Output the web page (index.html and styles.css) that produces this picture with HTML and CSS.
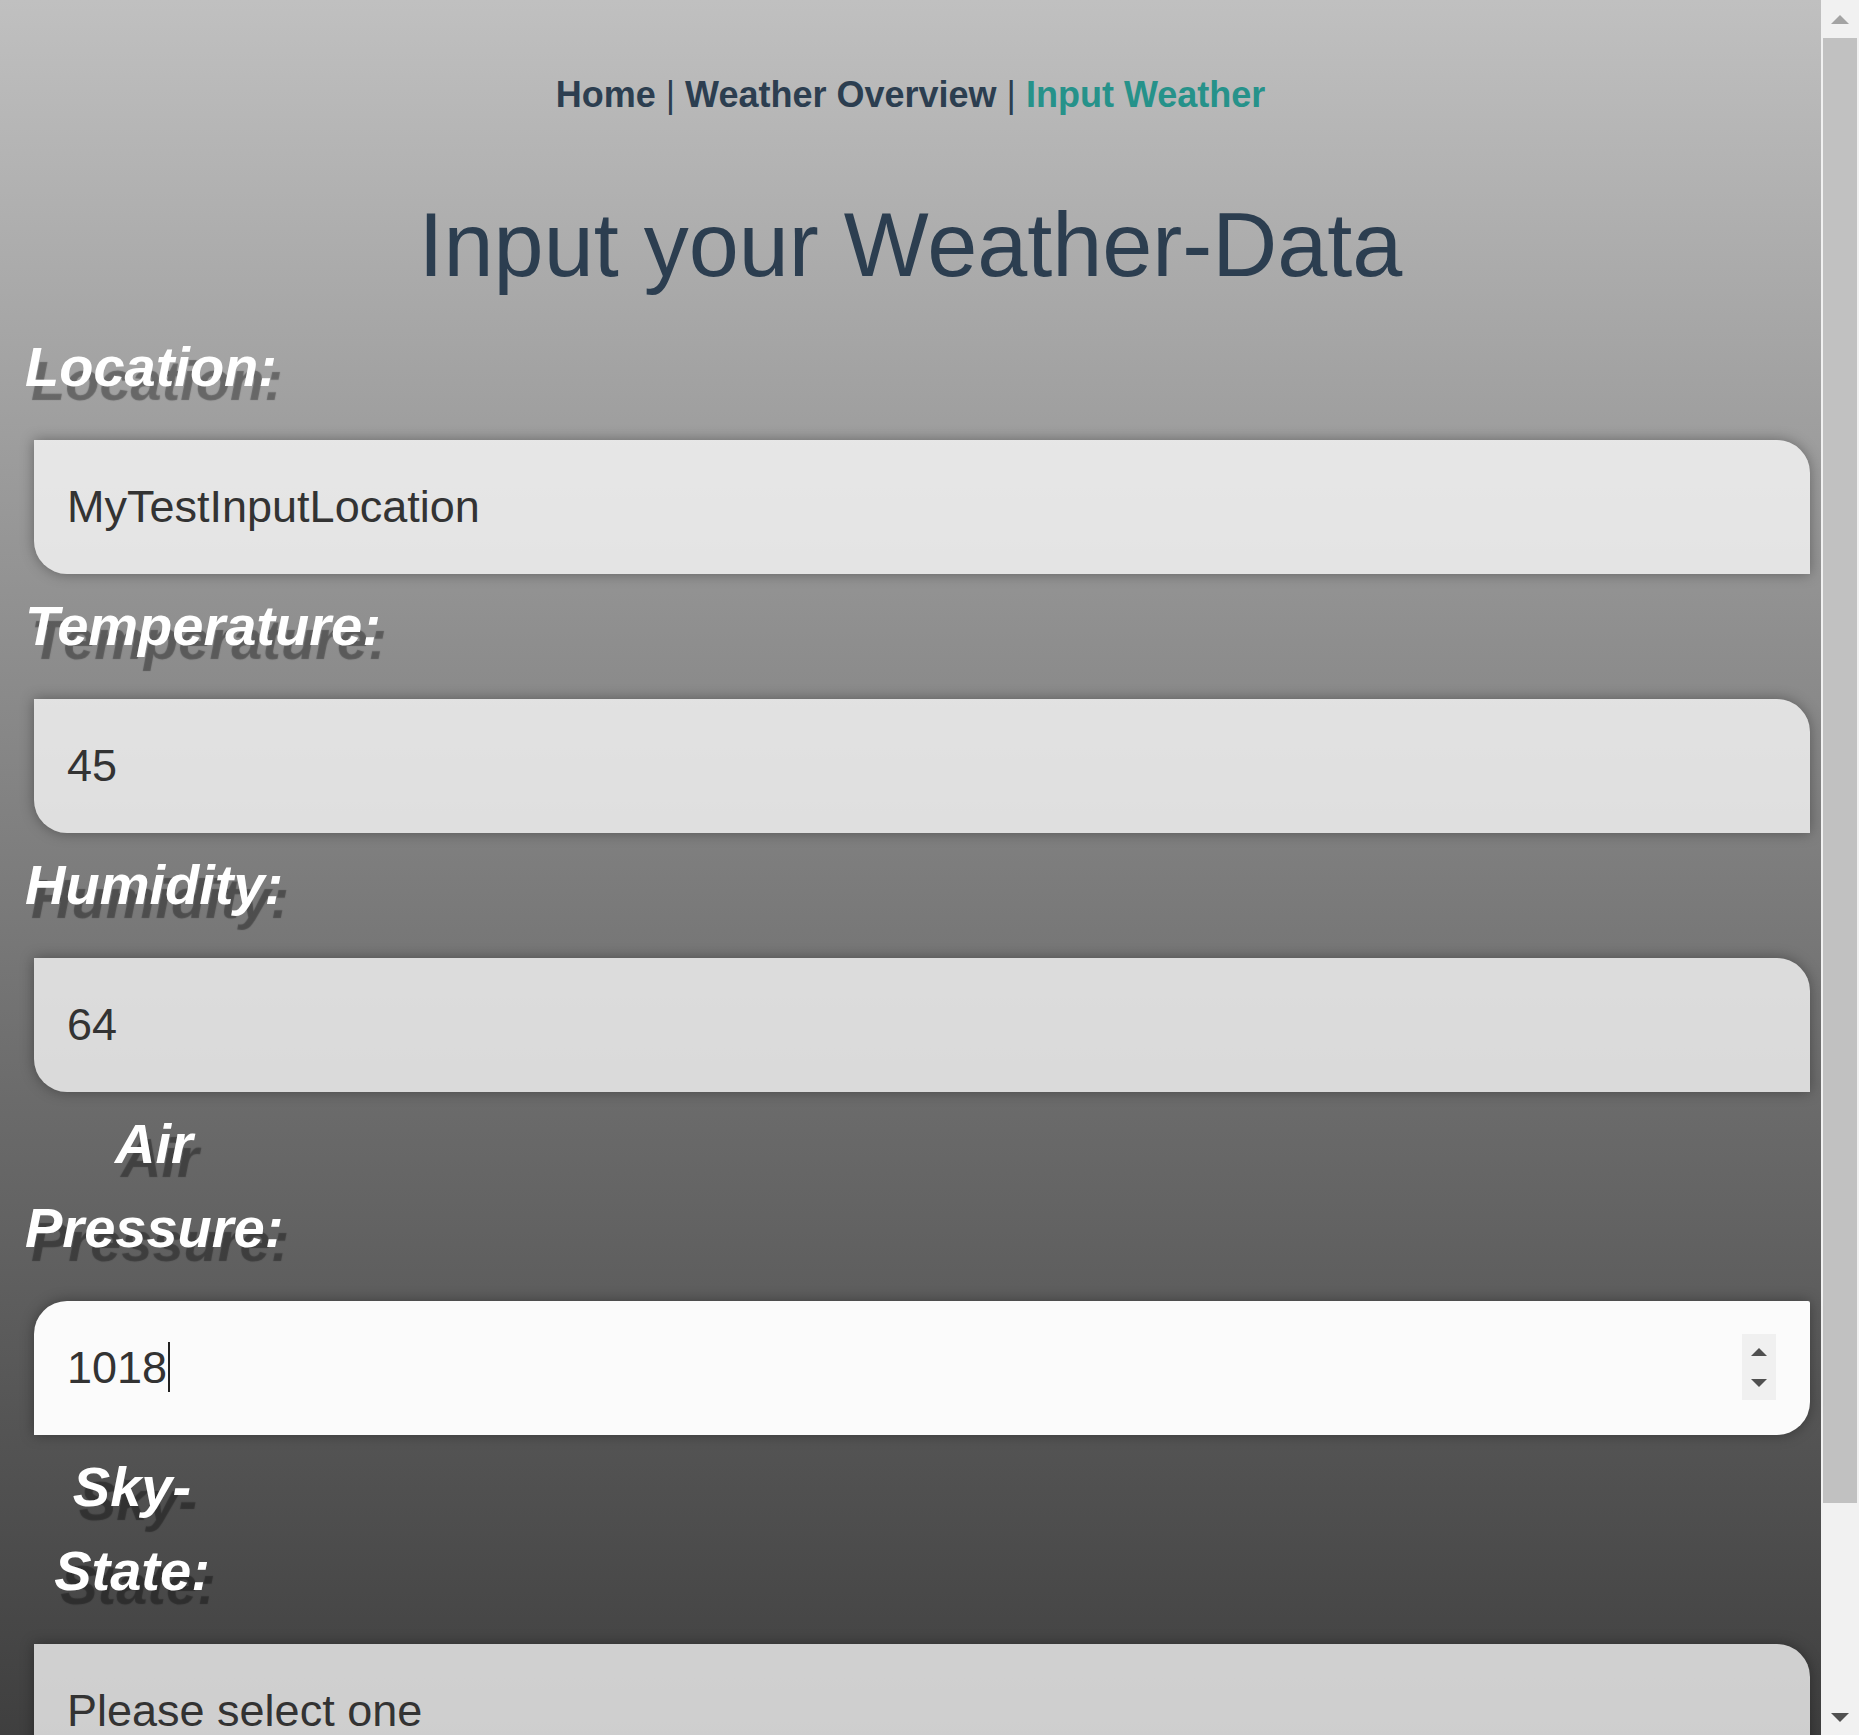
FILE: index.html
```html
<!DOCTYPE html>
<html lang="en">
<head>
<meta charset="utf-8">
<title>Input Weather</title>
<link rel="stylesheet" href="styles.css">
</head>
<body>
<div class="app">
  <nav class="nav">
    <a href="#" class="nav-link">Home</a> | <a href="#" class="nav-link">Weather Overview</a> | <a href="#" class="nav-link active">Input Weather</a>
  </nav>
  <h1 class="title">Input your Weather-Data</h1>
  <form class="form">
    <label class="label" for="loc">Location:</label>
    <input class="field" id="loc" type="text" value="MyTestInputLocation">
    <label class="label" for="temp">Temperature:</label>
    <input class="field" id="temp" type="number" value="45">
    <label class="label" for="hum">Humidity:</label>
    <input class="field" id="hum" type="number" value="64">
    <label class="label label-air" for="air">Air Pressure:</label>
    <div class="field-wrap">
      <input class="field field-focused" id="air" type="number" value="1018">
      <span class="caret"></span>
      <span class="spinner"><span class="spin-up"></span><span class="spin-down"></span></span>
    </div>
    <label class="label label-sky" for="sky">Sky-State:</label>
    <select class="field field-select" id="sky">
      <option>Please select one</option>
      <option>Sunny</option>
      <option>Cloudy</option>
      <option>Rainy</option>
    </select>
  </form>
</div>
<div class="scrollbar" aria-hidden="true">
  <div class="sb-btn"><span class="sb-arrow-up"></span></div>
  <div class="sb-track"><div class="sb-thumb"></div></div>
  <div class="sb-btn"><span class="sb-arrow-down"></span></div>
</div>
</body>
</html>
```
FILE: styles.css
```css
html {
  background: linear-gradient(to bottom, #c0c0c0 0px, #a6a6a6 330px, #6b6b6b 1100px, #3f3f3f 1735px, #303030 1965px);
  background-color: #303030;
  min-height: 100%;
}

body {
  margin: 0;
  display: flex;
  align-items: flex-start;
  font-family: "Liberation Sans", Arial, Helvetica, sans-serif;
  color: #2c3e50;
}

.app {
  flex: 1 1 auto;
  min-width: 0;
  display: flex;
  flex-direction: column;
  padding-bottom: 187px;
}

/* scrollbar column */
.scrollbar {
  flex: 0 0 38px;
  height: 1735px;
  display: flex;
  flex-direction: column;
  background: #f1f1f1;
}

.sb-btn {
  flex: 0 0 38px;
  display: flex;
  align-items: center;
  justify-content: center;
}

.sb-arrow-up {
  width: 0;
  height: 0;
  border-left: 9px solid transparent;
  border-right: 9px solid transparent;
  border-bottom: 9px solid #a3a3a3;
}

.sb-arrow-down {
  width: 0;
  height: 0;
  margin-top: 2px;
  border-left: 9px solid transparent;
  border-right: 9px solid transparent;
  border-top: 9px solid #505050;
}

.sb-track {
  flex: 1 1 auto;
  padding: 0 2px;
}

.sb-thumb {
  height: 1465px;
  background: #c1c1c1;
}

/* nav + title */
.nav {
  margin-top: 74px;
  text-align: center;
  font-size: 36px;
  line-height: normal;
  color: #2c3e50;
}

.nav-link {
  font-weight: bold;
  color: #2c3e50;
  text-decoration: none;
}

.nav-link.active {
  color: #26928a;
}

.title {
  margin: 78px 0 17px;
  text-align: center;
  font-size: 90px;
  font-weight: normal;
  line-height: 1.15;
  color: #2c3e50;
}

/* form */
.form {
  display: flex;
  flex-direction: column;
  align-items: stretch;
  padding: 0 11px 0 34px;
}

.label {
  display: block;
  margin: 10px 0 31px -9px;
  font-size: 56px;
  line-height: 84px;
  font-weight: bold;
  font-style: italic;
  color: #ffffff;
  text-shadow: 6px 14px 1px rgba(0, 0, 0, 0.36);
}

.label-air {
  width: 258px;
  text-align: center;
}

.label-sky {
  width: 214px;
  text-align: center;
}

.field {
  box-sizing: border-box;
  display: block;
  width: 100%;
  height: 134px;
  margin: 0;
  padding: 0 0 0 33px;
  border: none;
  outline: none;
  font-family: "Liberation Sans", Arial, Helvetica, sans-serif;
  font-size: 45px;
  color: #333333;
  background: rgba(255, 255, 255, 0.75);
  border-radius: 0 33px 0 33px;
  box-shadow: 0 0 14px rgba(0, 0, 0, 0.35);
  -webkit-appearance: none;
  appearance: none;
}

input[type="number"] {
  -moz-appearance: textfield;
}
input[type="number"]::-webkit-inner-spin-button,
input[type="number"]::-webkit-outer-spin-button {
  -webkit-appearance: none;
  margin: 0;
}

.field-wrap {
  position: relative;
}

.field-focused {
  background: #fbfbfb;
  border-radius: 33px 2px 33px 0;
}

.caret {
  position: absolute;
  left: 134px;
  top: 41px;
  width: 2px;
  height: 50px;
  background: #222222;
}

.spinner {
  position: absolute;
  right: 34px;
  top: 33px;
  width: 34px;
  height: 66px;
  background: #f0f0f0;
}

.spin-up,
.spin-down {
  position: absolute;
  left: 9px;
  width: 0;
  height: 0;
  border-left: 8px solid transparent;
  border-right: 8px solid transparent;
}

.spin-up {
  top: 14px;
  border-bottom: 8px solid #505050;
}

.spin-down {
  top: 45px;
  border-top: 8px solid #505050;
}

.field-select {
  cursor: pointer;
}
```
